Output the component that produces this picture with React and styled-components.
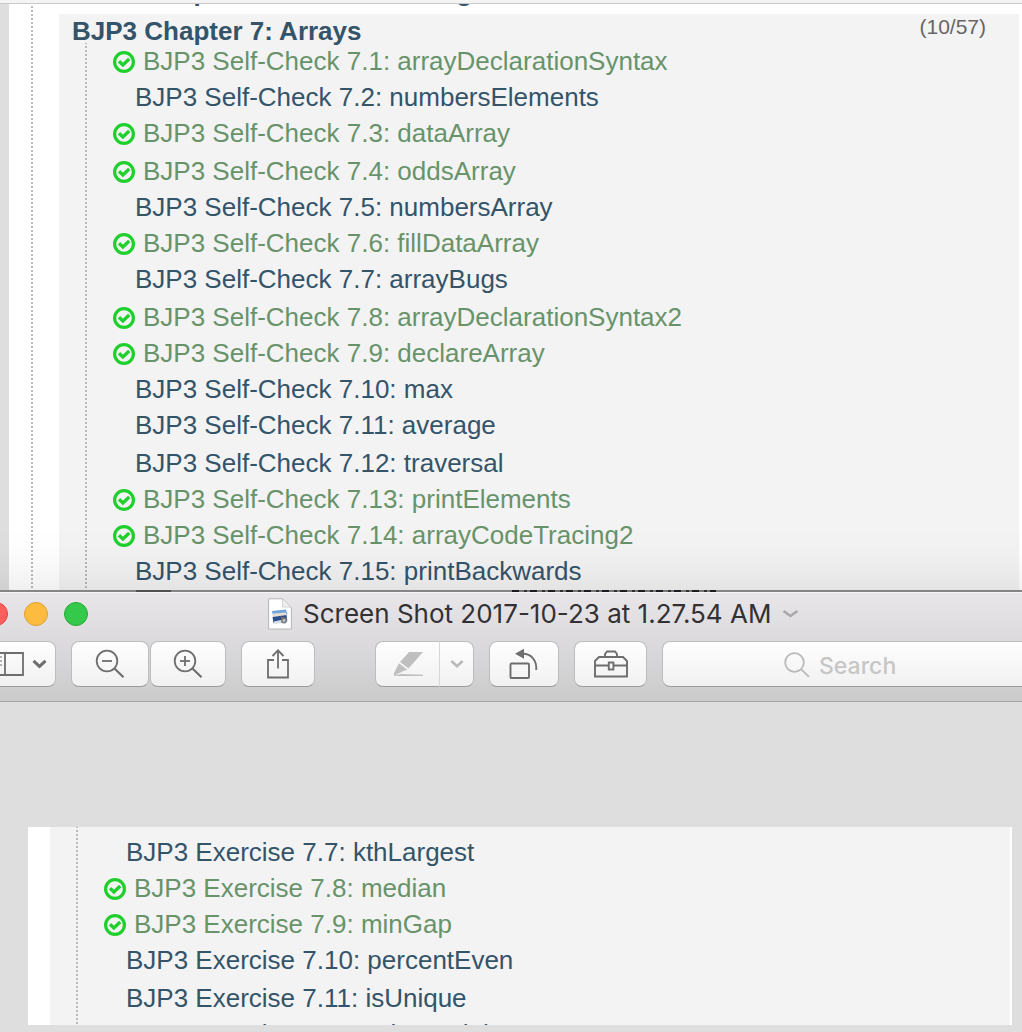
import React from 'react';
import styled, { createGlobalStyle, css } from 'styled-components';

const GlobalStyle = createGlobalStyle`
  * { box-sizing: border-box; }
  body {
    margin: 0;
    background: #dedede;
    font-family: "Liberation Sans", Arial, sans-serif;
    overflow-x: hidden;
  }
`;

const Screen = styled.div`
  display: flex;
  flex-direction: column;
  overflow: hidden;
`;

/* Browser window behind */

const BrowserEdge = styled.div`
  height: 4px;
  background: #f4f4f4;
  border-bottom: 1px solid #c9c9c9;
`;

const BrowserPage = styled.main`
  display: flex;
  background: #fff;
`;

const Gutter = styled.div`
  flex: none;
  width: 9px;
  background: #dedede;
`;

const dots = css`
  background-image: linear-gradient(#b9b9b9 50%, transparent 50%);
  background-size: 2px 4px;
  background-repeat: repeat-y;
`;

const Outline = styled.div`
  flex: 1;
  min-width: 0;
  margin-left: 22px;
  padding: 0 3px 0 28px;
  ${dots}
  background-position: 0 2px;
`;

const PreviousChapter = styled.div`
  display: flex;
  flex-direction: column;
  justify-content: flex-end;
  height: 10px;
  padding: 0 13px 8px;
  overflow: hidden;
`;

const Panel = styled.section`
  background: #f3f3f3;
  padding: ${(p) => (p.$sheet ? '0 0 0 26px' : '4px 0 1px 26px')};
  ${(p) => p.$sheet && css`flex: 1; min-width: 0;`}
`;

const PanelHead = styled.header`
  display: flex;
  justify-content: space-between;
  height: 25px;
  margin-left: -13px;
  padding-right: 33px;
`;

const Heading = styled.h2`
  margin: 0;
  font-size: 26px;
  line-height: 27px;
  font-weight: 700;
  color: #34546a;
  white-space: nowrap;
`;

const Count = styled.span`
  font-size: 21px;
  line-height: 18px;
  color: #666;
`;

const List = styled.ul`
  list-style: none;
  margin: 0;
  padding: ${(p) => p.$top || 0}px 0 0 28px;
  ${dots}
  background-position: 0 3px;
`;

const Item = styled.li`
  height: 36px;
  &:nth-child(4n + ${(p) => p.$step}):not(:last-child) { margin-bottom: 2px; }
`;

const ProblemLink = styled.a`
  display: flex;
  align-items: center;
  gap: 8px;
  padding-left: ${(p) => (p.$solved ? 0 : 22)}px;
  font-size: 26px;
  line-height: 36px;
  text-decoration: none;
  white-space: nowrap;
  color: ${(p) => (p.$solved ? '#68936a' : '#34546a')};
  svg { flex: none; margin-top: 2px; }
`;

/* Preview window in front */

const Backdrop = styled.div`
  height: 2px;
  background:
    repeating-linear-gradient(90deg, #1c1c20 0 7px, #77777a 7px 12px, #303034 12px 15px, #77777a 15px 18px) 512px 0 / 204px 2px no-repeat,
    linear-gradient(#505052, #505052) 136px 0 / 35px 2px no-repeat,
    #858587;
`;

const PreviewWindow = styled.section`
  position: relative;
  z-index: 1;
  box-shadow: 0 50px 60px 50px rgba(0, 0, 0, 0.12);
  background: #dedede;
`;

const Chrome = styled.header`
  height: 110px;
  background: linear-gradient(#e8e6e9, #cccbcc);
  border-top: 1px solid #f6f6f6;
  border-bottom: 1px solid #a6a6a6;
`;

const TitleBar = styled.div`
  display: grid;
  grid-template-columns: 268px 1fr;
  align-items: center;
  height: 42px;
`;

const Lights = styled.div`
  display: flex;
  gap: 16px;
  margin-left: -16px;
`;

const Light = styled.button`
  width: 24px;
  height: 24px;
  padding: 0;
  border-radius: 50%;
  border: 1px solid ${(p) => p.$edge};
  background: ${(p) => p.$fill};
`;

const Title = styled.div`
  display: flex;
  align-items: center;
  gap: 11px;
  svg { flex: none; }
`;

const FileName = styled.h1`
  margin: 0;
  font: 400 26px/32px Inter, Roboto, sans-serif;
  color: #333134;
  white-space: nowrap;
`;

const Toolbar = styled.div`
  display: flex;
  gap: 15px;
  height: 46px;
  margin-top: 6px;
`;

const surface = css`
  height: 46px;
  border: 1px solid #bdbcbe;
  border-bottom-color: #9c9c9d;
  border-radius: 8px;
  background: linear-gradient(#fefefe, #f1f1f1);
`;

const ToolButton = styled.button`
  ${surface}
  display: flex;
  flex: none;
  align-items: center;
  justify-content: center;
  gap: 8px;
  width: ${(p) => p.$width}px;
  padding: 0;
  color: #6e6e6e;
  svg { flex: none; }
  ${(p) => p.$side === 'edge' && css`
    border-left: 0;
    border-radius: 0 8px 8px 0;
    justify-content: flex-start;
  `}
  ${(p) => p.$side === 'left' && css`border-radius: 8px 0 0 8px; border-right: 0; color: #bfbfbf;`}
  ${(p) => p.$side === 'right' && css`border-radius: 0 8px 8px 0; border-left-color: #d6d6d6; color: #b9b9b9;`}
`;

const ToolGroup = styled.div`
  display: flex;
  gap: ${(p) => p.$gap || 0}px;
  margin-left: ${(p) => p.$lead || 0}px;
`;

const SearchField = styled.label`
  ${surface}
  display: flex;
  flex: 1;
  min-width: 0;
  align-items: center;
  gap: 9px;
  padding-left: 121px;
  border-right: 0;
  border-radius: 8px 0 0 8px;
  svg { flex: none; margin-top: 2px; }
`;

const SearchInput = styled.input`
  flex: 1;
  min-width: 0;
  border: 0;
  padding: 3px 0 0;
  outline: 0;
  background: transparent;
  font: 500 23px/32px Inter, Roboto, sans-serif;
  color: #444;
  &::placeholder { color: #c6c6c6; opacity: 1; }
`;

const Canvas = styled.div`
  padding: 125px 10px 7px 28px;
`;

const Sheet = styled.article`
  display: flex;
  height: 198px;
  overflow: hidden;
  background: #fff;
  padding: 0 2px 0 22px;
`;

const Solved = () => (
  <svg width="22" height="22" viewBox="0 0 22 22" role="img" aria-label="Solved">
    <circle cx="11" cy="11" r="9.4" fill="none" stroke="#1fd02c" strokeWidth="3.2" />
    <path d="M6 10.2l3.9 3.7 6.3-5.9" fill="none" stroke="#1fd02c" strokeWidth="3.3" />
  </svg>
);

const Chevron = ({ width = 15, weight = 3 }) => (
  <svg width={width} height="10" viewBox="0 0 15 10" aria-hidden="true">
    <path d="M1.5 1.8l6 5.6 6-5.6" fill="none" stroke="currentColor" strokeWidth={weight} />
  </svg>
);

const Sidebar = () => (
  <svg width="24" height="24" viewBox="0 0 24 24" fill="none" stroke="currentColor" aria-hidden="true">
    <path d="M-2 1h25v22H-2M5 1v22" strokeWidth="1.8" />
    <path d="M0 5h2M0 9h2M0 13h2" strokeWidth="1.2" />
  </svg>
);

const Magnifier = ({ plus }) => (
  <svg width="30" height="30" viewBox="0 0 30 30" fill="none" stroke="currentColor" strokeWidth="1.8" aria-hidden="true">
    <circle cx="12" cy="12" r="10.3" />
    <path d="M7 12h10" />
    {plus && <path d="M12 7v10" />}
    <path d="M19.5 19.5l9 8.7" strokeWidth="2.2" />
  </svg>
);

const Share = () => (
  <svg width="24" height="32" viewBox="0 0 24 32" fill="none" stroke="currentColor" strokeWidth="1.8" aria-hidden="true">
    <path d="M8 12H2v17.5h20V12h-6M12 20.5V2.5M6.5 8L12 2.4 17.5 8" />
  </svg>
);

const Marker = () => (
  <svg width="32" height="26" viewBox="0 0 32 26" fill="currentColor" aria-hidden="true">
    <path d="M17 1h14L16.5 17.5 8 11zM7 12.3l8.3 6.5-4 1.2L2 25v-3z" />
    <path d="M9 23l22 .8V25H2z" />
  </svg>
);

const Rotate = () => (
  <svg width="30" height="32" viewBox="0 0 30 32" fill="none" stroke="currentColor" strokeWidth="1.9" aria-hidden="true">
    <rect x="1.5" y="15.5" width="18.5" height="14.5" rx="1" />
    <path d="M14 5.8c8 0 13.8 6 13.3 16.2" />
    <path d="M15 .8v10L6 5.8z" fill="currentColor" stroke="none" />
  </svg>
);

const Toolbox = () => (
  <svg width="36" height="28" viewBox="0 0 36 28" fill="none" stroke="currentColor" strokeWidth="1.9" aria-hidden="true">
    <path d="M2 26.5V11l4-4h24l4 4v15.5zM12 7V4l2-2.5h8L24 4v3M2 15.5h13.5M20.5 15.5H34" />
    <rect x="15.8" y="12.5" width="4.6" height="7" />
  </svg>
);

const SearchGlass = () => (
  <svg width="26" height="26" viewBox="0 0 26 26" fill="none" stroke="#b9b9b9" strokeWidth="1.8" aria-hidden="true">
    <circle cx="10.5" cy="10.5" r="9.3" />
    <path d="M17.3 17.3l7.7 7.5" />
  </svg>
);

const FileIcon = () => (
  <svg width="24" height="32" viewBox="0 0 24 32" aria-hidden="true">
    <path d="M.6.8h14L23.4 10v21H.6z" fill="#fff" stroke="#b5b4b7" />
    <path d="M14.6.8V9h8.2z" fill="#efefef" stroke="#c6c6c8" strokeWidth=".8" />
    <path d="M4 13l14-1.5 1.5 5L5 18z" fill="#6fa4dc" />
    <path d="M5 15.5l13-1 .5 3L5 19z" fill="#e6dfcf" />
    <path d="M4.5 19l14-2 .8 6L5.5 25z" fill="#2b4f8d" />
    <path d="M6 23.5l9-2 3 3-12 1.5z" fill="#d4dce6" />
    <circle cx="16" cy="22.5" r="3" fill="#77797e" />
    <circle cx="16" cy="22.5" r="1.4" fill="#c5c7cb" />
    <path d="M12 18.5l4 1-1 2z" fill="#927454" />
  </svg>
);

const chapterProblems = [
  ['7.1: arrayDeclarationSyntax', true],
  ['7.2: numbersElements', false],
  ['7.3: dataArray', true],
  ['7.4: oddsArray', true],
  ['7.5: numbersArray', false],
  ['7.6: fillDataArray', true],
  ['7.7: arrayBugs', false],
  ['7.8: arrayDeclarationSyntax2', true],
  ['7.9: declareArray', true],
  ['7.10: max', false],
  ['7.11: average', false],
  ['7.12: traversal', false],
  ['7.13: printElements', true],
  ['7.14: arrayCodeTracing2', true],
  ['7.15: printBackwards', false],
];

const exercises = [
  ['7.7: kthLargest', false],
  ['7.8: median', true],
  ['7.9: minGap', true],
  ['7.10: percentEven', false],
  ['7.11: isUnique', false],
  ['7.12: priceIsRight', false],
];

const ProblemList = ({ kind, problems, step, top }) => (
  <List $top={top}>
    {problems.map(([name, solved]) => (
      <Item key={name} $step={step}>
        <ProblemLink href="#" $solved={solved}>
          {solved && <Solved />}
          <span>{`BJP3 ${kind} ${name}`}</span>
        </ProblemLink>
      </Item>
    ))}
  </List>
);

export default function App() {
  return (
    <Screen>
      <GlobalStyle />
      <BrowserEdge />
      <BrowserPage>
        <Gutter />
        <Outline>
          <PreviousChapter>
            <Heading>BJP3 Chapter 6: File Processing</Heading>
          </PreviousChapter>
          <Panel>
            <PanelHead>
              <Heading>BJP3 Chapter 7: Arrays</Heading>
              <Count>(10/57)</Count>
            </PanelHead>
            <ProblemList kind="Self-Check" problems={chapterProblems} step={3} />
          </Panel>
        </Outline>
      </BrowserPage>
      <PreviewWindow>
        <Backdrop />
        <Chrome>
          <TitleBar>
            <Lights>
              <Light aria-label="Close" $fill="#fc605c" $edge="#e2443f" />
              <Light aria-label="Minimize" $fill="#fdbc40" $edge="#dfa033" />
              <Light aria-label="Zoom" $fill="#34c94a" $edge="#27ab35" />
            </Lights>
            <Title>
              <FileIcon />
              <FileName>Screen Shot 2017-10-23 at 1.27.54 AM</FileName>
              <svg width="17" height="10" viewBox="0 0 17 10" aria-hidden="true">
                <path d="M1.5 2l7 5 7-5" fill="none" stroke="#a9a8ab" strokeWidth="2.6" />
              </svg>
            </Title>
          </TitleBar>
          <Toolbar>
            <ToolButton $width={56} $side="edge" aria-label="View options">
              <Sidebar />
              <Chevron />
            </ToolButton>
            <ToolGroup $gap={1}>
              <ToolButton $width={78} aria-label="Zoom out"><Magnifier /></ToolButton>
              <ToolButton $width={76} aria-label="Zoom in"><Magnifier plus /></ToolButton>
            </ToolGroup>
            <ToolButton $width={74} aria-label="Share"><Share /></ToolButton>
            <ToolGroup $lead={45}>
              <ToolButton $width={64} $side="left" aria-label="Highlight"><Marker /></ToolButton>
              <ToolButton $width={35} $side="right" aria-label="Highlight colours"><Chevron width={14} weight={2.8} /></ToolButton>
            </ToolGroup>
            <ToolButton $width={70} aria-label="Rotate"><Rotate /></ToolButton>
            <ToolButton $width={73} aria-label="Markup toolbox"><Toolbox /></ToolButton>
            <SearchField>
              <SearchGlass />
              <SearchInput type="text" placeholder="Search" aria-label="Search" />
            </SearchField>
          </Toolbar>
        </Chrome>
        <Canvas>
          <Sheet>
            <Panel $sheet>
              <ProblemList kind="Exercise" problems={exercises} step={4} top={7} />
            </Panel>
          </Sheet>
        </Canvas>
      </PreviewWindow>
    </Screen>
  );
}
